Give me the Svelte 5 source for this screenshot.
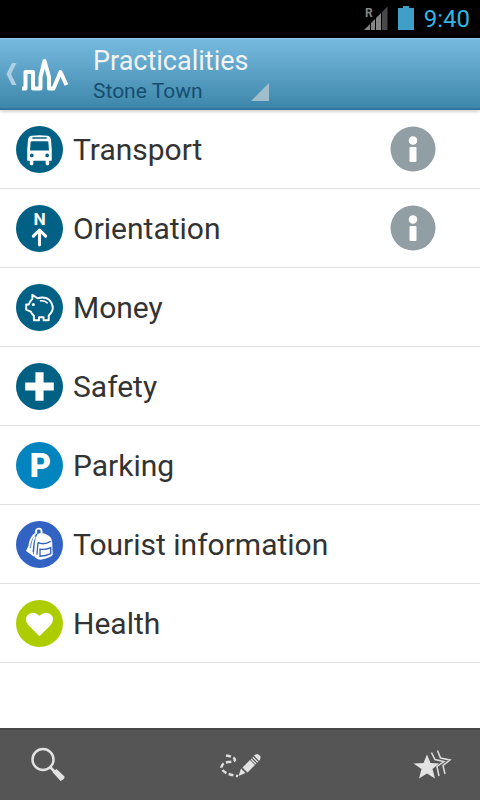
<script>
  const items = [
    { name: 'Transport', icon: 'bus', color: '#006184', info: true },
    { name: 'Orientation', icon: 'north', color: '#006184', info: true },
    { name: 'Money', icon: 'pig', color: '#006184' },
    { name: 'Safety', icon: 'cross', color: '#006184' },
    { name: 'Parking', icon: 'parking', color: '#0284bf' },
    { name: 'Tourist information', icon: 'backpack', color: '#3263c2' },
    { name: 'Health', icon: 'heart', color: '#aecd00' }
  ];
</script>

<div class="screen">
  <div class="status">
    <svg width="24" height="24" viewBox="0 0 24 24" aria-hidden="true">
      <path d="M0 24 6 18V24ZM7 17 11 13V24H7ZM12 12 17 7V24H12Z" fill="#858585" />
      <path d="M18 6 23.500 0.500V24H18Z" fill="#484848" />
      <text x="1" y="11" class="roaming">R</text>
    </svg>
    <svg width="16" height="24" viewBox="0 0 16 24" aria-hidden="true">
      <path d="M5 0H11V2H16V24H0V2H5Z" fill="#3f9fc7" />
    </svg>
    <time>9:40</time>
  </div>

  <header>
    <button class="home" aria-label="Back">
      <svg width="64" height="42" viewBox="0 0 64 42" aria-hidden="true">
        <path d="M6 10H10.500L5 21 10.500 32H6L0.500 21Z" fill="#afd0e2" />
        <path d="M16 35.500H19.500V19H27V35.500H34.500V24L38.500 8 43 24V35.500H47.500L54.500 19 60.500 32" fill="none" stroke="#fff" stroke-width="4" stroke-linejoin="round" />
      </svg>
    </button>
    <button class="place">
      <span class="names">
        <span class="title">Practicalities</span>
        <span class="sub">Stone Town</span>
      </span>
      <svg width="18" height="18" viewBox="0 0 18 18" aria-hidden="true"><path d="M18 0V18H0Z" fill="#9fbfcd" /></svg>
    </button>
  </header>

  <main>
    <ul>
      {#each items as item}
        <li>
          <a href="#{item.icon}">
            <svg class="badge" viewBox="0 0 46 46" aria-hidden="true">
              <circle cx="23" cy="23" r="23" fill={item.color} />
              {#if item.icon === 'bus'}
                <path fill="#fff" fill-rule="evenodd" d="M15 9.500Q23 8.500 31 9.500Q34 10 34.300 14L35 23V34H32.500V37Q32.500 38.500 30.800 38.500T29 37V34H17V37Q17 38.500 15.200 38.500T13.500 37V34H11V23L11.700 14Q12 10 15 9.500ZM16 11V12.500H30V11ZM15.500 15Q14.500 15 14.300 16L13.700 24H32.300L31.700 16Q31.500 15 30.500 15ZM15.500 27A1.800 1.800 0 1 0 15.500 30.600A1.800 1.800 0 1 0 15.500 27ZM30.500 27A1.800 1.800 0 1 0 30.500 30.600A1.800 1.800 0 1 0 30.500 27Z" />
              {:else if item.icon === 'north'}
                <text x="23" y="20" class="north">N</text>
                <path d="M23 39V25M17 30.500 23 24.500 29 30.500" fill="none" stroke="#fff" stroke-width="3" stroke-linecap="round" stroke-linejoin="round" />
              {:else if item.icon === 'pig'}
                <path d="M16 14.500V10.500L21 14Q28 12 32.500 15.500Q36 19 36 23.500Q36 27 32 31V35.500H27V32.500H22.500V35.500H17.500V31Q15 29 14.500 27L10 25V20H12.500Q13.500 17 16 14.500Z" fill="none" stroke="#fff" stroke-width="1.900" stroke-linejoin="round" />
                <path d="M24 16.500Q28 16 30.500 18.500" fill="none" stroke="#fff" stroke-width="1.500" stroke-linecap="round" />
                <circle cx="17" cy="20" r="1.500" fill="#fff" />
              {:else if item.icon === 'cross'}
                <path d="M19 9H27V19H37V27H27V37H19V27H9V19H19Z" fill="#fff" />
              {:else if item.icon === 'parking'}
                <text x="24" y="34" class="parking">P</text>
              {:else if item.icon === 'backpack'}
                <path d="M21 13Q26 10 32 14.500Q36 17 35.500 24L36 33Q34 36 24 38Q18 37 17.500 33L18.500 21Q19 16 21 13Z" fill="#fff" />
                <path d="M21.500 21Q27 24 34 20M21.500 21 20.500 33M23.500 27.500Q29 28.500 34 26V32Q29 34.500 23.500 34.500Z" fill="none" stroke={item.color} stroke-width="1.300" />
                <path d="M20 12.500Q18.500 8 22 7.500T25 12M19 12.500Q14 16 13 25L11 29 18 34M18.500 15Q15.500 21 15.500 29" fill="none" stroke="#fff" stroke-width="1.900" />
                <path d="M10.500 28 14 26 17 31 16 33Z" fill="#fff" />
              {:else}
                <path d="M23 35.500 12 24.500Q8 19.500 11 15Q16.500 9.500 23 15.500Q29.500 9.500 35 15Q38 19.500 34 24.500Z" fill="#fff" />
              {/if}
            </svg>
            <span>{item.name}</span>
          </a>
          {#if item.info}
            <button class="info" aria-label="About {item.name}">
              <svg width="46" height="46" viewBox="0 0 46 46" aria-hidden="true">
                <circle cx="23" cy="23" r="22.500" fill="#919ea4" />
                <circle cx="23" cy="14.500" r="4.300" fill="#fff" />
                <rect x="19.500" y="21" width="7" height="15" rx="1" fill="#fff" />
              </svg>
            </button>
          {/if}
        </li>
      {/each}
    </ul>
  </main>

  <footer>
    <button aria-label="Search">
      <svg width="40" height="40" viewBox="0 0 40 40" aria-hidden="true">
        <circle cx="15" cy="14.500" r="10.500" fill="none" stroke="#e2e2e2" stroke-width="2.500" />
        <path d="M22 22 27 27" stroke="#e2e2e2" stroke-width="2.500" />
        <path d="M24.500 27 28.500 24 36.500 31.500Q37 34 32.500 36Z" fill="#e2e2e2" />
      </svg>
    </button>
    <button aria-label="Plan a route">
      <svg width="44" height="40" viewBox="0 0 44 40" aria-hidden="true">
        <path d="M8 10.500Q17 12 17 15Q16 17 10 17Q4 18 3.500 22Q4 29 20 31" fill="none" stroke="#ddd" stroke-width="2.500" stroke-dasharray="5 2.500" />
        <path d="M20.500 31 23 23.500 27.500 28ZM24.500 22.500 32 15 37 20 29.500 27.500ZM36 10.500Q40 7 42.500 11.500Q43 14 41 16Z" fill="#e2e2e2" />
        <path d="M33 14 38 19M34.800 12.200 39.800 17.200" stroke="#e2e2e2" stroke-width="1.300" />
      </svg>
    </button>
    <button aria-label="Favourites">
      <svg width="40" height="40" viewBox="0 0 40 40" aria-hidden="true">
        <path d="M15 9.500 18.500 18 27 18.500 20.500 24 23 33.500 15 28.500 7 33.500 9.500 24 1.500 18.500 11.500 18Z" fill="#e2e2e2" />
        <path d="M19.500 7.500 23 14.500 32 16.500 25 21.500 27 31M25.500 5.500 28.500 13 38 15 31 20.500 33 29" fill="none" stroke="#ddd" stroke-width="1.500" />
      </svg>
    </button>
  </footer>
</div>

<style>
  :global(body) {
    margin: 0;
  }
  .screen {
    display: flex;
    flex-direction: column;
    min-height: 100vh;
    background: #fff;
    font-family: Roboto, 'Noto Sans', sans-serif;
  }
  button {
    padding: 0;
    border: 0;
    background: none;
    font: inherit;
    color: inherit;
    text-align: left;
    cursor: pointer;
  }
  svg {
    display: block;
    flex: none;
  }
  .status {
    display: flex;
    align-items: center;
    justify-content: flex-end;
    gap: 10px;
    box-sizing: border-box;
    height: 38px;
    padding: 0 10px 2px 0;
    background: #000;
    color: #33b5e5;
  }
  .roaming {
    fill: #858585;
    font-size: 12px;
    font-weight: 700;
  }
  .north,
  .parking {
    fill: #fff;
    font-size: 17px;
    font-weight: 700;
    text-anchor: middle;
  }
  .parking {
    font-size: 32px;
    font-weight: 900;
  }
  time {
    padding-top: 2px;
    font-size: 24px;
    line-height: 28px;
  }
  header {
    display: flex;
    align-items: center;
    box-sizing: border-box;
    height: 72px;
    padding-left: 6px;
    gap: 23px;
    border-top: 1px solid #91c6e8;
    border-bottom: 2px solid #34749a;
    background: linear-gradient(#77badf, #3d86aa);
    box-shadow: 0 1px 4px rgba(0, 0, 0, 0.25);
    z-index: 1;
  }
  .place {
    display: flex;
    align-items: flex-end;
    gap: 3px;
  }
  .place svg {
    padding-bottom: 3px;
  }
  .names {
    display: flex;
    flex-direction: column;
  }
  .title {
    color: #f3f3f3;
    font-size: 27px;
    line-height: 34px;
  }
  .sub {
    color: #164e70;
    font-size: 21px;
    line-height: 26px;
  }
  main {
    flex: 1;
  }
  ul {
    margin: 0;
    padding: 0;
    list-style: none;
  }
  li {
    display: flex;
    align-items: center;
    height: 78px;
    padding: 0 44px 0 16px;
    border-bottom: 1px solid #e1e1e1;
  }
  a {
    display: flex;
    flex: 1;
    align-items: center;
    gap: 10px;
    color: #333;
    font-size: 30px;
    line-height: 36px;
    text-decoration: none;
  }
  a span {
    padding-top: 2px;
  }
  .badge {
    width: 47px;
    height: 47px;
  }
  footer {
    display: flex;
    align-items: center;
    justify-content: space-between;
    box-sizing: border-box;
    height: 72px;
    padding: 0 28px;
    border-top: 2px solid #484848;
    background: #555;
  }
</style>
